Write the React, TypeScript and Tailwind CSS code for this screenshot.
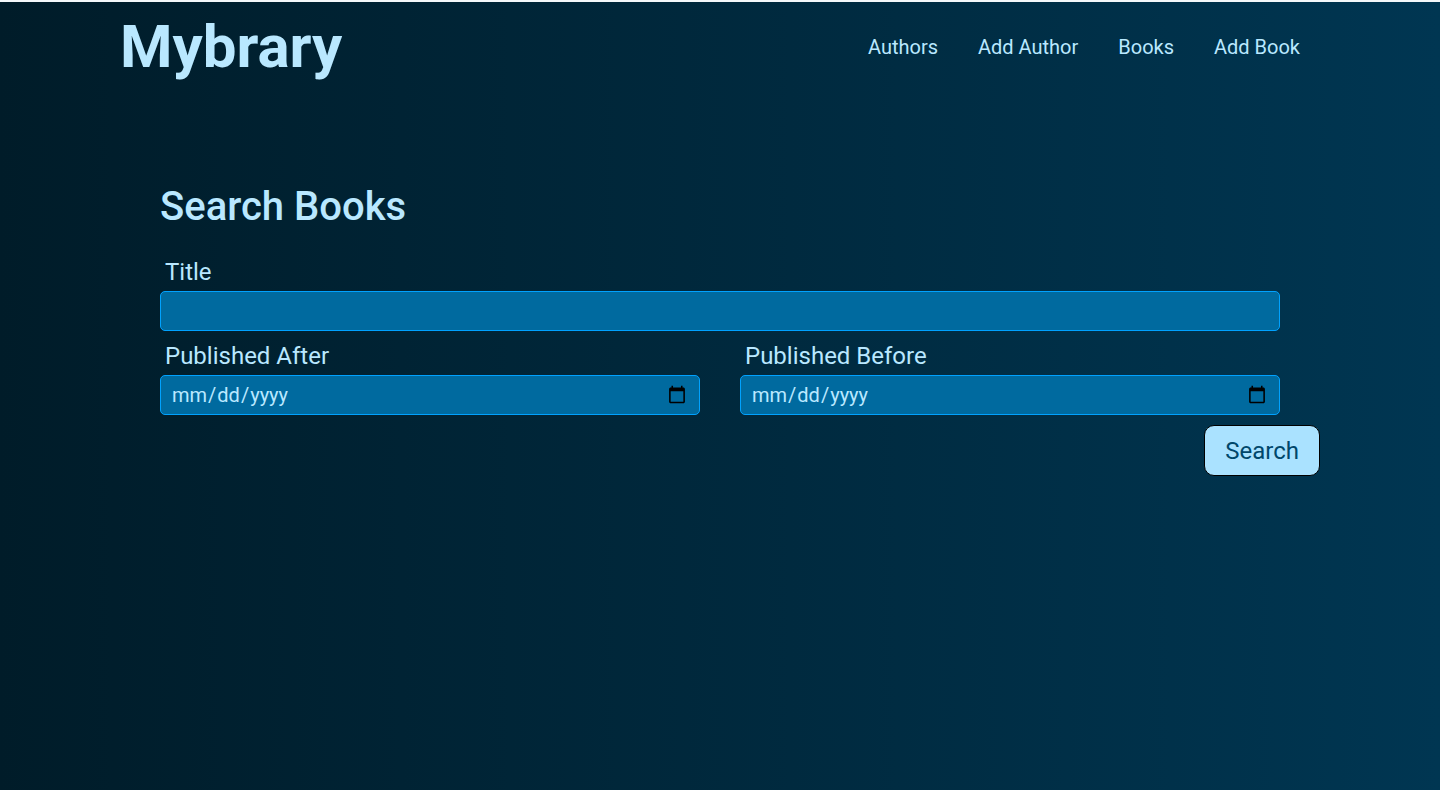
const navLinks = ["Authors", "Add Author", "Books", "Add Book"];

const inputClass =
  "h-10 w-full rounded-[5px] border border-[#00a2ff] bg-[#006a9f] px-[10px] text-xl text-[#b9e8ff] outline-none";

function Field({ id, label, type }: { id: string; label: string; type: string }) {
  return (
    <div className="min-w-0 flex-1">
      <label htmlFor={id} className="flex h-[39px] items-center pl-[5px] text-2xl">
        {label}
      </label>
      <input id={id} name={id} type={type} className={inputClass} />
    </div>
  );
}

export default function App() {
  return (
    <div className="min-h-screen border-t-2 border-[#f4f8fa] bg-linear-to-r from-[#001c29] to-[#003652] font-['Roboto',sans-serif] text-[#b9e8ff]">
      <header className="flex items-center justify-between px-30">
        <h1 className="text-6xl leading-[89px] font-bold">
          <a href="/">Mybrary</a>
        </h1>
        <nav className="flex gap-10 pr-5 text-xl">
          {navLinks.map((name) => (
            <a key={name} href="#">
              {name}
            </a>
          ))}
        </nav>
      </header>
      <main className="px-30 pt-[81px]">
        <h2 className="px-10 text-[40px] leading-[70px] font-medium">Search Books</h2>
        <form>
          <div className="px-10 pt-[10px]">
            <Field id="title" label="Title" type="text" />
            <div className="flex gap-10 pt-[5px]">
              <Field id="publishedAfter" label="Published After" type="date" />
              <Field id="publishedBefore" label="Published Before" type="date" />
            </div>
          </div>
          <div className="flex justify-end pt-[10px]">
            <button
              type="submit"
              className="h-[51px] rounded-[10px] border border-black bg-[#aae2ff] px-5 text-2xl text-[#00476b]"
            >
              Search
            </button>
          </div>
        </form>
      </main>
    </div>
  );
}
